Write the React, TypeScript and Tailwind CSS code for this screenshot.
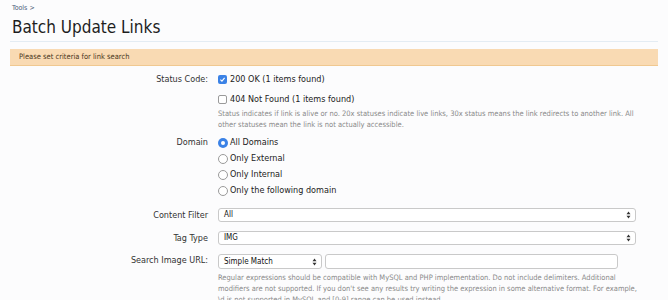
import { ReactNode } from 'react';

const font = { fontFamily: '"DejaVu Sans Condensed", "DejaVu Sans", Verdana, sans-serif' };

function Checkbox({ checked }: { checked?: boolean }) {
  return checked ? (
    <span className="flex h-[9px] w-[9px] items-center justify-center rounded-[2px] bg-[#3b82e6]">
      <svg viewBox="0 0 10 10" className="h-[7px] w-[7px]">
        <path d="M2 5.2 L4.2 7.3 L8 2.8" fill="none" stroke="#fff" strokeWidth="1.6" />
      </svg>
    </span>
  ) : (
    <span className="h-[9px] w-[9px] rounded-[2px] border border-[#9a9a9a] bg-white" />
  );
}

function Radio({ checked }: { checked?: boolean }) {
  return checked ? (
    <span className="flex h-[10px] w-[10px] items-center justify-center rounded-full bg-[#3b82e6]">
      <span className="h-[4px] w-[4px] rounded-full bg-white" />
    </span>
  ) : (
    <span className="h-[10px] w-[10px] rounded-full border border-[#9a9a9a] bg-white" />
  );
}

function Arrows() {
  return (
    <svg viewBox="0 0 6 10" className="h-[8px] w-[5px]">
      <path d="M3 0.5 L5.5 4 L0.5 4 Z M3 9.5 L5.5 6 L0.5 6 Z" fill="#333" />
    </svg>
  );
}

function Select({ value, className }: { value: string; className: string }) {
  return (
    <div
      className={
        'flex items-center justify-between rounded-[3px] border border-[#c9c9c9] bg-white pl-[5px] pr-[4px] text-[8px] text-[#111] ' +
        className
      }
    >
      <span>{value}</span>
      <Arrows />
    </div>
  );
}

function Row({ label, children, className }: { label: string; children: ReactNode; className?: string }) {
  return (
    <div className={'flex ' + (className ?? '')}>
      <div className="w-[208px] shrink-0 text-right text-[9px] leading-[13px] text-[#333]">{label}</div>
      <div className="ml-[10px] flex-1">{children}</div>
    </div>
  );
}

function Help({ lines }: { lines: string[] }) {
  return (
    <p className="whitespace-nowrap text-[7.5px] leading-[11px] text-[#8a8a8a]">
      {lines.map((l, i) => (
        <span key={i} className="block">
          {l}
        </span>
      ))}
    </p>
  );
}

export default function App() {
  return (
    <div className="h-[300px] w-[668px] overflow-hidden bg-[#fcfcfd]" style={font}>
      <div className="px-[12px] pt-[4px]">
        <div className="text-[7px] leading-[9px] text-[#4b5b78]">Tools &gt;</div>
        <h1 className="mt-[3px] text-[17px] leading-[22px] text-[#1e1e1e]">Batch Update Links</h1>
      </div>
      <div className="mx-[10px] mt-[3px] border-b border-[#e4ecf3]" />
      <div className="mx-[10px] mt-[7px] flex h-[17px] items-center border-b border-[#f0c890] bg-[#f9dab3] pl-[9px] text-[7.5px] text-[#4a3520]">
        Please set criteria for link search
      </div>

      <div className="mt-[7px]">
        <Row label="Status Code:">
          <div className="flex items-center gap-[3px] text-[9px] leading-[13px] text-[#222]">
            <Checkbox checked />
            <span>200 OK (1 items found)</span>
          </div>
          <div className="mt-[7px] flex items-center gap-[3px] text-[9px] leading-[13px] text-[#222]">
            <Checkbox />
            <span>404 Not Found (1 items found)</span>
          </div>
          <div className="mt-[2px]">
            <Help
              lines={[
                'Status indicates if link is alive or no. 20x statuses indicate live links, 30x status means the link redirects to another link. All',
                'other statuses mean the link is not actually accessible.',
              ]}
            />
          </div>
        </Row>

        <Row label="Domain" className="mt-[6px]">
          {['All Domains', 'Only External', 'Only Internal', 'Only the following domain'].map((o, i) => (
            <div
              key={o}
              className={
                'flex items-center gap-[2px] text-[9px] leading-[13px] text-[#222] ' + (i > 0 ? 'mt-[3px]' : '')
              }
            >
              <Radio checked={i === 0} />
              <span>{o}</span>
            </div>
          ))}
        </Row>

        <Row label="Content Filter" className="mt-[11px] items-center">
          <Select value="All" className="h-[14px] w-[418px]" />
        </Row>
        <Row label="Tag Type" className="mt-[9px] items-center">
          <Select value="IMG" className="h-[14px] w-[418px]" />
        </Row>
        <Row label="Search Image URL:" className="mt-[9px]">
          <div className="flex items-center gap-[3px]">
            <Select value="Simple Match" className="h-[15px] w-[104px]" />
            <div className="h-[15px] w-[293px] rounded-[3px] border border-[#c9c9c9] bg-white" />
          </div>
          <div className="mt-[3px]">
            <Help
              lines={[
                'Regular expressions should be compatible with MySQL and PHP implementation. Do not include delimiters. Additional',
                "modifiers are not supported. If you don't see any results try writing the expression in some alternative format. For example,",
                '\\d is not supported in MySQL and [0-9] range can be used instead.',
              ]}
            />
          </div>
        </Row>
      </div>
    </div>
  );
}
